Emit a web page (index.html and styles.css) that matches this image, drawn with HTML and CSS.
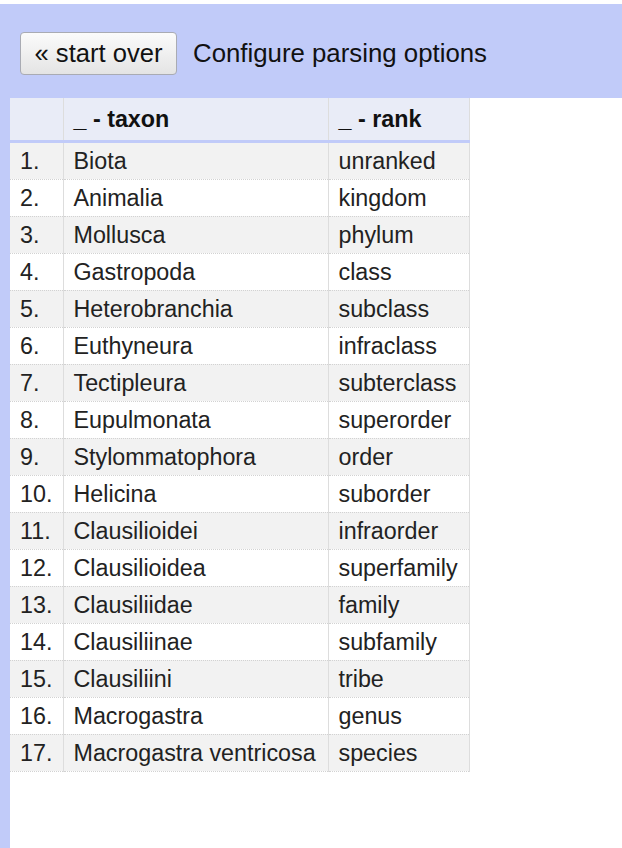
FILE: index.html
```html
<!DOCTYPE html>
<html>
<head>
<meta charset="utf-8">
<link rel="stylesheet" href="styles.css">
</head>
<body>
<div class="page">
  <div class="toolbar">
    <button class="btn">« start over</button>
    <span class="title">Configure parsing options</span>
  </div>
  <div class="main">
    <table class="grid">
      <thead>
        <tr><th class="num"></th><th class="taxon">_ - taxon</th><th class="rank">_ - rank</th></tr>
      </thead>
      <tbody>
        <tr><td class="num">1.</td><td>Biota</td><td>unranked</td></tr>
        <tr><td class="num">2.</td><td>Animalia</td><td>kingdom</td></tr>
        <tr><td class="num">3.</td><td>Mollusca</td><td>phylum</td></tr>
        <tr><td class="num">4.</td><td>Gastropoda</td><td>class</td></tr>
        <tr><td class="num">5.</td><td>Heterobranchia</td><td>subclass</td></tr>
        <tr><td class="num">6.</td><td>Euthyneura</td><td>infraclass</td></tr>
        <tr><td class="num">7.</td><td>Tectipleura</td><td>subterclass</td></tr>
        <tr><td class="num">8.</td><td>Eupulmonata</td><td>superorder</td></tr>
        <tr><td class="num">9.</td><td>Stylommatophora</td><td>order</td></tr>
        <tr><td class="num">10.</td><td>Helicina</td><td>suborder</td></tr>
        <tr><td class="num">11.</td><td>Clausilioidei</td><td>infraorder</td></tr>
        <tr><td class="num">12.</td><td>Clausilioidea</td><td>superfamily</td></tr>
        <tr><td class="num">13.</td><td>Clausiliidae</td><td>family</td></tr>
        <tr><td class="num">14.</td><td>Clausiliinae</td><td>subfamily</td></tr>
        <tr><td class="num">15.</td><td>Clausiliini</td><td>tribe</td></tr>
        <tr><td class="num">16.</td><td>Macrogastra</td><td>genus</td></tr>
        <tr><td class="num">17.</td><td>Macrogastra ventricosa</td><td>species</td></tr>
      </tbody>
    </table>
  </div>
</div>
</body>
</html>
```

FILE: styles.css
```css
html, body {
  margin: 0;
  padding: 0;
  background: #ffffff;
  font-family: "Liberation Sans", Arial, sans-serif;
  color: #222222;
}
.page {
  padding-top: 4px;
}
.toolbar {
  background: #c1cbf9;
  height: 94px;
  box-sizing: border-box;
  padding: 28px 0 0 20px;
  display: flex;
  align-items: flex-start;
}
.btn {
  font-family: "Liberation Sans", Arial, sans-serif;
  font-size: 25.6px;
  color: #111111;
  height: 43px;
  width: 157px;
  padding: 0;
  border: 1px solid #a9abb3;
  border-radius: 4px;
  background: linear-gradient(#fbfbfb, #e4e4e4);
  margin: 0;
}
.title {
  font-size: 25.8px;
  color: #111111;
  line-height: 43px;
  margin-left: 16px;
}
.main {
  border-left: 10px solid #c1cbf9;
  min-height: 750px;
  box-sizing: border-box;
}
.grid {
  border-collapse: collapse;
  font-size: 23.3px;
  border-right: 1px solid #dddddd;
}
.grid th {
  background: #e9ecf7;
  height: 43px;
  padding: 2px 10px 0 10px;
  text-align: left;
  font-weight: bold;
  color: #111111;
  border-bottom: 3px solid #c1cbf9;
  border-left: 1px solid #dddddd;
  box-sizing: border-box;
}
.grid th.num {
  border-left: none;
  width: 53px;
}
.grid th.taxon { width: 265px; }
.grid th.rank { width: 141px; }
.grid td {
  height: 35px;
  padding: 1px 10px 0 10px;
  border-bottom: 1px dotted #d2d2d2;
  border-left: 1px solid #dddddd;
  white-space: nowrap;
  line-height: 35px;
  color: #222222;
}
.grid td.num {
  border-left: none;
}
.grid tbody tr:nth-child(odd) td {
  background: #f2f2f2;
}
```
